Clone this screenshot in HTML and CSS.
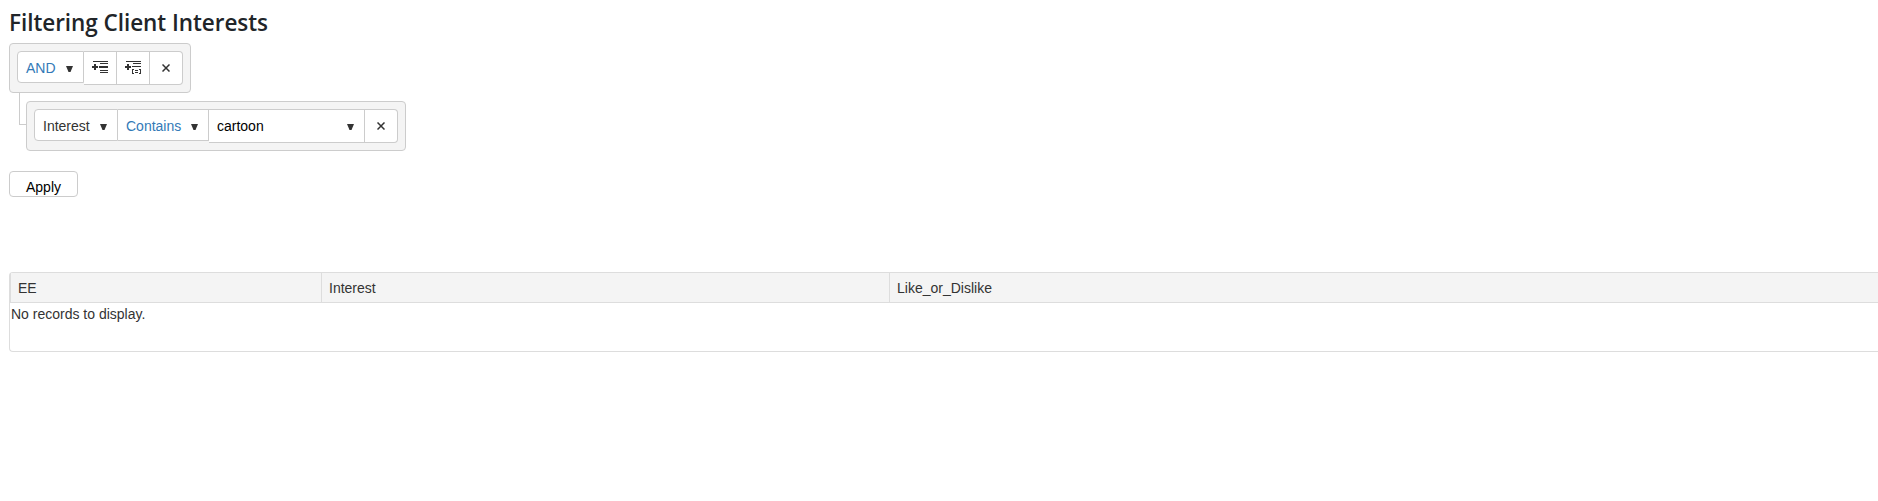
FILE: index.html
```
<!DOCTYPE html>
<html lang="en">
<head>
<meta charset="utf-8">
<title>Filtering Client Interests</title>
<link rel="stylesheet" href="styles.css">
</head>
<body>
<h1 class="title">Filtering Client Interests</h1>
<div class="filter">
  <div class="group group-root">
    <div class="cell drop link and">AND<svg class="caret" viewBox="0 0 7 6"><path d="M0 0h7L4.5 6h-2z"/></svg></div>
    <button class="cell tall tool" aria-label="Add expression"><svg width="16" height="12" viewBox="0 0 16 12" shape-rendering="crispEdges"><path d="M1 0h15v1H1zM8 2h8v1H8zM7 5h9v2H7zM8 9h8v1H8zM8 11h8v1H8zM0 5h6v2H0zM2 3h2v6H2z"/></svg></button>
    <button class="cell tall tool" aria-label="Add group"><svg width="16" height="14" viewBox="0 0 16 14" shape-rendering="crispEdges"><path d="M1 1h15v1H1zM8 3h8v1H8zM7 6h9v1H7zM0 6h6v2H0zM2 4h2v6H2zM7 9h2v1H8v3h1v1H7zM14 9h2v5h-2v-1h1v-3h-1zM10 10h3v1h-3zM10 12h3v1h-3z"/></svg></button>
    <button class="cell tall tool last" aria-label="Remove"><svg class="x" viewBox="0 0 8 8"><path d="M.5.5l7 7M7.5.5l-7 7"/></svg></button>
  </div>
  <div class="branch">
    <div class="elbow"></div>
    <div class="group">
      <div class="cell drop field">Interest<svg class="caret" viewBox="0 0 7 6"><path d="M0 0h7L4.5 6h-2z"/></svg></div>
      <div class="cell drop link operator">Contains<svg class="caret" viewBox="0 0 7 6"><path d="M0 0h7L4.5 6h-2z"/></svg></div>
      <div class="cell tall drop value">cartoon<svg class="caret" viewBox="0 0 7 6"><path d="M0 0h7L4.5 6h-2z"/></svg></div>
      <button class="cell tall tool last" aria-label="Remove"><svg class="x" viewBox="0 0 8 8"><path d="M.5.5l7 7M7.5.5l-7 7"/></svg></button>
    </div>
  </div>
</div>
<button class="apply">Apply</button>
<div class="grid">
  <div class="head">
    <div class="th ee">EE</div>
    <div class="th interest">Interest</div>
    <div class="th like">Like_or_Dislike</div>
  </div>
  <div class="empty">No records to display.</div>
</div>
</body>
</html>
```
FILE: styles.css
```
* { box-sizing: border-box; }
body {
  margin: 0;
  padding: 8px 0 0 9px;
  background: #fff;
  color: #333;
  font: 14px/20px "Liberation Sans", Arial, sans-serif;
  overflow: hidden;
}
.title {
  margin: 0;
  height: 35px;
  font: 550 22.5px/30px "Open Sans", "Noto Sans", sans-serif;
  letter-spacing: -0.05px;
  color: #212529;
  white-space: nowrap;
}
.group {
  display: flex;
  align-items: flex-start;
  width: max-content;
  height: 50px;
  padding: 7px;
  background: #f4f4f4;
  border: 1px solid #ccc;
  border-radius: 4px;
}
.cell {
  height: 32px;
  margin: 0;
  padding: 0;
  background: #fff;
  border: 1px solid #ccc;
  border-left-width: 0;
  display: flex;
  align-items: center;
}
.cell:first-child { border-left-width: 1px; border-radius: 4px 0 0 4px; }
.tall { height: 34px; }
.last { border-radius: 0 4px 4px 0; }
.tool { width: 33px; justify-content: center; padding-bottom: 2px; }
.tool svg { fill: #333; }
.last.tool { padding-bottom: 0; }
.drop { justify-content: space-between; padding: 1px 10px 0 8px; }
.caret { width: 7px; height: 6px; margin-top: 2px; fill: #333; }
.x { width: 8px; height: 8px; stroke: #333; stroke-width: 1.5; }
.link { color: #337ab7; }
.and { width: 67px; }
.field { width: 84px; }
.operator { width: 91px; }
.value { width: 156px; color: #000; padding-bottom: 2px; }
.branch { display: flex; padding-left: 10px; }
.elbow {
  width: 7px;
  height: 32px;
  border: solid #ccc;
  border-width: 0 0 1px 1px;
}
.branch .group { margin-top: 8px; }
.apply {
  display: block;
  width: 69px;
  height: 26px;
  margin: 20px 0 0;
  padding: 5px 0 0;
  background: #fff;
  border: 1px solid #ccc;
  border-radius: 4px;
  color: #000;
  font: 14px/18px "Liberation Sans", Arial, sans-serif;
}
.grid {
  height: 80px;
  margin-top: 75px;
  border: 1px solid #ddd;
  border-right: 0;
  border-radius: 4px 0 0 4px;
}
.head {
  display: flex;
  height: 30px;
  background: #f4f4f4;
  border-bottom: 1px solid #ddd;
}
.th { padding: 5px 0 0 7px; border-left: 1px solid #ddd; }
.ee { width: 311px; }
.interest { width: 568px; }
.like { flex: 1; }
.empty { padding: 1px 0 0 1px; }
```
